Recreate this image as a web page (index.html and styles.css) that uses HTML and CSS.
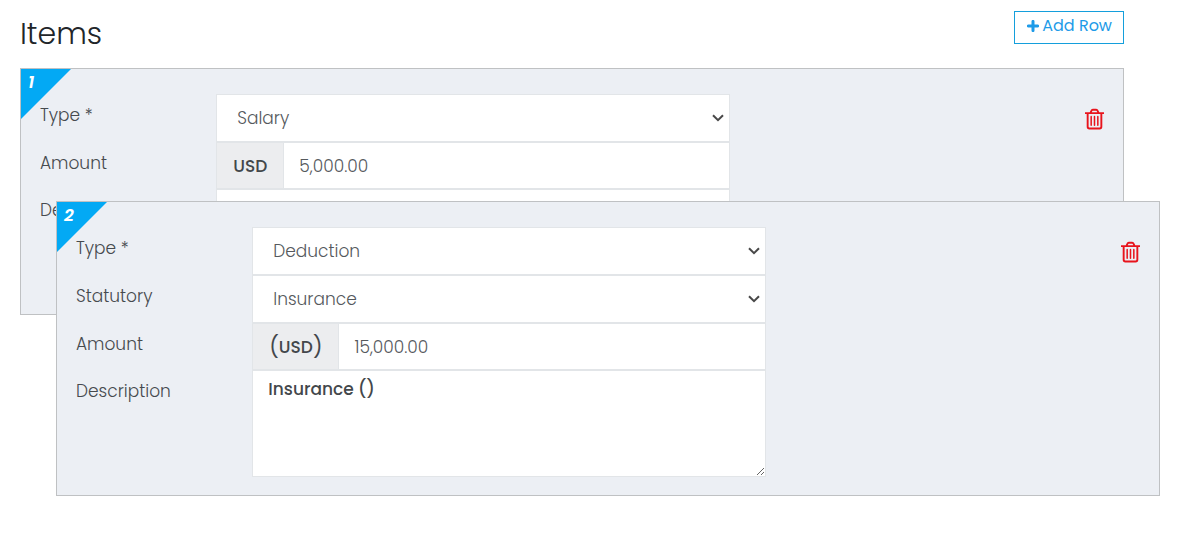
FILE: index.html
```
<!DOCTYPE html>
<html lang="en">
<head>
  <meta charset="UTF-8">
  <meta name="viewport" content="width=device-width, initial-scale=1.0">
  <title>Items</title>
  <link rel="stylesheet" href="styles.css">
</head>
<body>
  <div class="items-header">
    <h1>Items</h1>
    <button type="button" class="btn-add">
      <svg class="icon-plus" viewBox="0 0 12 12" aria-hidden="true"><path d="M6 1.4v9.2M1.4 6h9.2"/></svg>
      Add Row
    </button>
  </div>

  <form class="items">
    <div class="item">
      <span class="item-number">1</span>
      <div class="fields">
        <label for="type1">Type *</label>
        <select id="type1" class="control">
          <option>Salary</option>
          <option>Deduction</option>
        </select>

        <label for="amount1">Amount</label>
        <div class="input-group">
          <span class="addon">USD</span>
          <input type="text" id="amount1" class="control" value="5,000.00">
        </div>

        <label for="description1">Description</label>
        <textarea id="description1" class="control"></textarea>
      </div>
      <button type="button" class="btn-delete" aria-label="Delete row">
        <svg viewBox="0 0 20 22" aria-hidden="true">
          <path d="M.5 4.8h19M5.8 4.5l1-2.3q.4-1 1.4-1h3.6q1 0 1.4 1l1 2.3M2.8 5v14.2q0 1.8 1.8 1.8h10.8q1.8 0 1.8-1.8V5"/>
          <path class="thin" d="M6.5 8.5v9M10 8.5v9M13.5 8.5v9"/>
        </svg>
      </button>
    </div>

    <!-- row being dragged, floats over the list -->
    <div class="item dragging">
      <span class="item-number">2</span>
      <div class="fields">
        <label for="type2">Type *</label>
        <select id="type2" class="control">
          <option>Deduction</option>
          <option>Salary</option>
        </select>

        <label for="statutory2">Statutory</label>
        <select id="statutory2" class="control">
          <option>Insurance</option>
        </select>

        <label for="amount2">Amount</label>
        <div class="input-group">
          <span class="addon"><span class="paren">(</span>USD<span class="paren">)</span></span>
          <input type="text" id="amount2" class="control" value="15,000.00">
        </div>

        <label for="description2">Description</label>
        <textarea id="description2" class="control">Insurance ()</textarea>
      </div>
      <button type="button" class="btn-delete" aria-label="Delete row">
        <svg viewBox="0 0 20 22" aria-hidden="true">
          <path d="M.5 4.8h19M5.8 4.5l1-2.3q.4-1 1.4-1h3.6q1 0 1.4 1l1 2.3M2.8 5v14.2q0 1.8 1.8 1.8h10.8q1.8 0 1.8-1.8V5"/>
          <path class="thin" d="M6.5 8.5v9M10 8.5v9M13.5 8.5v9"/>
        </svg>
      </button>
    </div>
  </form>
</body>
</html>
```
FILE: styles.css
```
* {
  box-sizing: border-box;
}
body {
  margin: 0;
  min-height: 100vh;
  padding: 11px 64px 20px 20px;
  font-family: Poppins, Inter, sans-serif;
  font-size: 17px;
  font-weight: 300;
  color: #464a4e;
  background-color: #fff;
}
button, input, select, textarea {
  font: inherit;
  color: inherit;
}
.items-header {
  display: flex;
  justify-content: space-between;
  align-items: flex-start;
  margin-bottom: 12px;
}
h1 {
  margin: 0;
  font-size: 30px;
  font-weight: 300;
  line-height: 45px;
  color: #212529;
}
.btn-add {
  display: flex;
  align-items: center;
  gap: 3px;
  height: 33px;
  padding: 0 11px 4px 12px;
  border: 1px solid #149fdc;
  background-color: #fff;
  color: #1e9be8;
  font-size: 16px;
  font-weight: 400;
  cursor: pointer;
}
.icon-plus {
  width: 12px;
  height: 12px;
  fill: none;
  stroke: currentColor;
  stroke-width: 3;
  stroke-linecap: round;
}
.item {
  position: relative;
  display: flex;
  padding: 25px 19px 18px;
  border: 1px solid #bfc1c3;
  background-color: #eceff4;
}
.item.dragging {
  z-index: 1;
  margin: -114px -36px 0 36px;
}
.item-number {
  position: absolute;
  top: 0;
  left: 0;
  width: 50px;
  height: 50px;
  padding: 2px 7px;
  background-color: #03a9f4;
  clip-path: polygon(0 0, 100% 0, 0 100%);
  color: #fff;
  font-size: 17px;
  font-weight: 600;
  font-style: italic;
  line-height: 22px;
}
.fields {
  flex: 1;
  display: grid;
  grid-template-columns: 17% 49.5%;
  align-items: start;
  margin-right: 8px;
}
.fields label {
  line-height: 42px;
}
.control {
  width: 100%;
  height: 48px;
  padding: 0 15px;
  border: 1px solid #e2e5e8;
  border-radius: 0;
  background-color: #fff;
  color: #55595d;
}
select.control {
  appearance: none;
  padding: 0 20px;
  background: #fff url("data:image/svg+xml,%3Csvg xmlns='http://www.w3.org/2000/svg' viewBox='0 0 12 8'%3E%3Cpath fill='none' stroke='%23484848' stroke-width='2' d='M1 1.2l5 5 5-5'/%3E%3C/svg%3E") no-repeat right 5px center / 12px 8px;
}
textarea.control {
  display: block;
  height: 107px;
  padding: 7px 15px;
  color: #43474b;
  font-weight: 500;
  line-height: 22px;
  resize: both;
}
.input-group {
  display: flex;
  height: 47px;
}
.input-group .control {
  flex: 1;
  min-width: 0;
  height: 100%;
  border-left: 0;
}
.addon {
  display: flex;
  align-items: center;
  padding: 0 16px;
  border: 1px solid #e2e5e8;
  background-color: #ecedef;
  color: #43474b;
  font-weight: 500;
}
.paren {
  font-size: 21px;
  font-weight: 400;
}
.btn-delete {
  align-self: flex-start;
  margin-top: 14px;
  padding: 0;
  border: 0;
  background: none;
  color: #e8141c;
  cursor: pointer;
}
.btn-delete svg {
  display: block;
  width: 19px;
  height: 22px;
  fill: none;
  stroke: currentColor;
  stroke-width: 2;
  stroke-linecap: round;
  stroke-linejoin: round;
}
.btn-delete .thin {
  stroke-width: 1.6;
}
```
